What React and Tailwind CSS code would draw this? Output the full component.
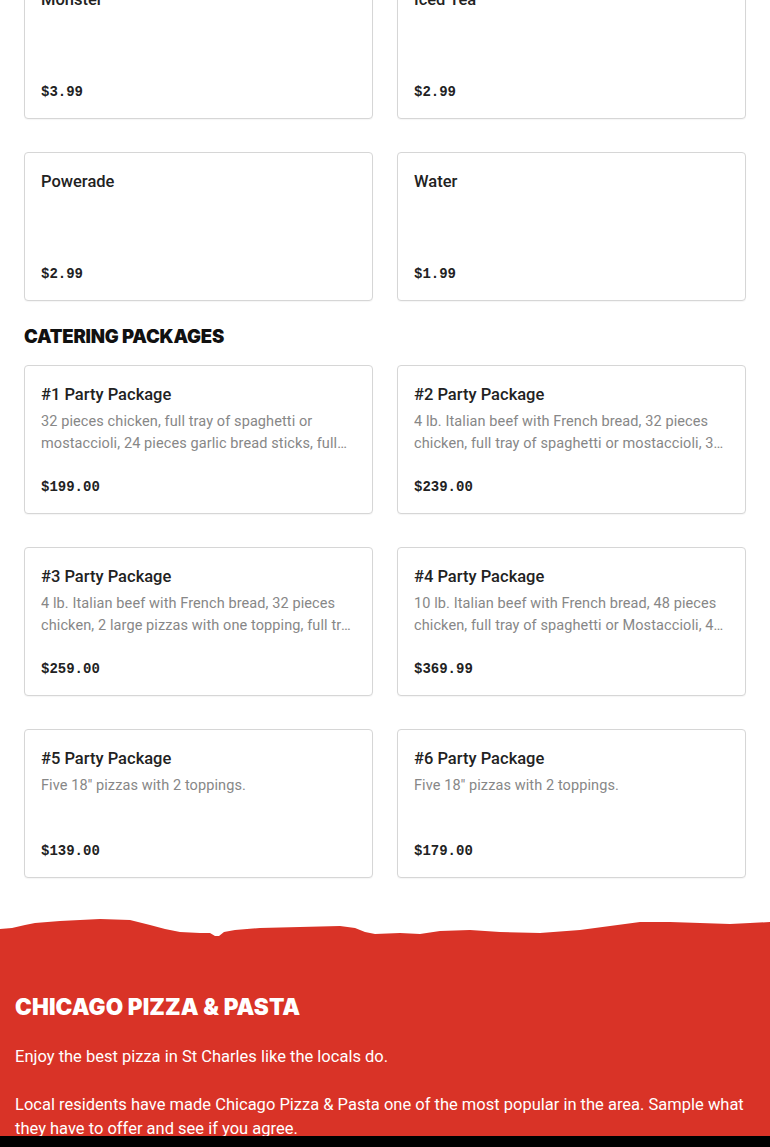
const drinks = [
  { name: "Monster", price: "$3.99" },
  { name: "Iced Tea", price: "$2.99" },
  { name: "Powerade", price: "$2.99" },
  { name: "Water", price: "$1.99" },
];

const packages = [
  {
    name: "#1 Party Package",
    desc: "32 pieces chicken, full tray of spaghetti or mostaccioli, 24 pieces garlic bread sticks, full tray of salad and a 2 liter soda.",
    price: "$199.00",
  },
  {
    name: "#2 Party Package",
    desc: "4 lb. Italian beef with French bread, 32 pieces chicken, full tray of spaghetti or mostaccioli, 3 large pizzas with one topping.",
    price: "$239.00",
  },
  {
    name: "#3 Party Package",
    desc: "4 lb. Italian beef with French bread, 32 pieces chicken, 2 large pizzas with one topping, full tray of spaghetti or mostaccioli.",
    price: "$259.00",
  },
  {
    name: "#4 Party Package",
    desc: "10 lb. Italian beef with French bread, 48 pieces chicken, full tray of spaghetti or Mostaccioli, 4 large pizzas with one topping.",
    price: "$369.99",
  },
  { name: "#5 Party Package", desc: "Five 18'' pizzas with 2 toppings.", price: "$139.00" },
  { name: "#6 Party Package", desc: "Five 18'' pizzas with 2 toppings.", price: "$179.00" },
];

const MenuCard = ({ item }) => (
  <div className="h-[149px] flex flex-col border border-[#d6d6d6] rounded-[4px] bg-white px-4 pt-[17px] pb-4 shadow-[0_1px_1px_rgba(0,0,0,0.04)]">
    <h3 className="text-[16.5px] leading-6 font-medium text-[#222]">{item.name}</h3>
    {item.desc && (
      <p className="mt-1 text-[14.5px] leading-[22px] tracking-[0.1px] text-[#878787] line-clamp-2">{item.desc}</p>
    )}
    <span className="mt-auto font-['Liberation_Mono',monospace] font-bold text-[14px] leading-5 text-[#222]">
      {item.price}
    </span>
  </div>
);

const TornEdge = () => (
  <svg viewBox="0 0 770 25" preserveAspectRatio="none" className="block w-full h-[25px]">
    <path
      fill="#d93327"
      d="M0 14 L12 13 L25 10 L35 8 L60 6 L100 4 L130 5 L150 10 L165 14 L180 17 L200 18 L210 18 L215 21 L219 21 L224 17 L235 15 L260 13 L300 12 L340 11 L355 13 L365 17 L375 19 L400 18 L420 19 L440 16 L470 15 L500 17 L540 18 L580 15 L610 11 L640 7 L670 7 L700 8 L730 9 L750 8 L770 7 L770 25 L0 25 Z"
    />
  </svg>
);

const App = () => {
  return (
    <div className="min-h-screen bg-white font-['Roboto',sans-serif] overflow-hidden">
      <div className="px-6">
        <div className="grid grid-cols-2 gap-x-6 gap-y-[33px] -mt-[30px]">
          {drinks.map((d) => (
            <MenuCard key={d.name} item={d} />
          ))}
        </div>
        <h2 className="pt-[23px] pb-[17px] font-['Inter',sans-serif] font-black uppercase text-[18.5px] leading-6 tracking-[-0.2px] text-[#111]">
          Catering Packages
        </h2>
        <div className="grid grid-cols-2 gap-x-6 gap-y-[33px]">
          {packages.map((p) => (
            <MenuCard key={p.name} item={p} />
          ))}
        </div>
      </div>

      <footer className="mt-[37px]">
        <TornEdge />
        <div className="bg-[#d93327] px-[15px] pt-[53px] pb-10 text-white">
          <h2 className="font-['Inter',sans-serif] font-black uppercase text-[22.5px] leading-7 tracking-[0.1px]">
            Chicago Pizza &amp; Pasta
          </h2>
          <p className="mt-6 text-[16.5px] leading-6">Enjoy the best pizza in St Charles like the locals do.</p>
          <p className="mt-6 text-[16.5px] leading-6">
            Local residents have made Chicago Pizza &amp; Pasta one of the most popular in the area. Sample what
            they have to offer and see if you agree.
          </p>
        </div>
      </footer>

      <div className="fixed bottom-0 left-0 right-0 h-[11px] bg-black" />
    </div>
  );
};

export default App;
